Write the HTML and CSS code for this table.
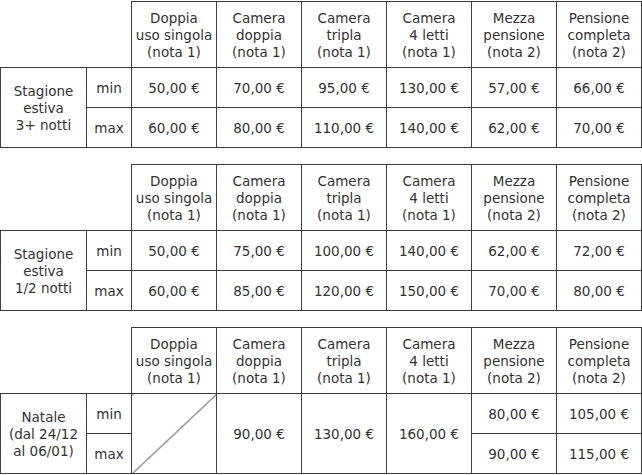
FILE: index.html
```html
<!DOCTYPE html>
<html>
<head>
<meta charset="utf-8">
<link rel="stylesheet" href="styles.css">
</head>
<body>
<div class="page">
<table class="rates">
  <colgroup><col class="c-label"><col class="c-mm"><col class="c-val"><col class="c-val"><col class="c-val"><col class="c-val"><col class="c-val"><col class="c-val"></colgroup>
  <tr class="head">
    <td class="blank" colspan="2"></td>
    <td>Doppia<br>uso singola<br>(nota 1)</td>
    <td>Camera<br>doppia<br>(nota 1)</td>
    <td>Camera<br>tripla<br>(nota 1)</td>
    <td>Camera<br>4 letti<br>(nota 1)</td>
    <td>Mezza<br>pensione<br>(nota 2)</td>
    <td>Pensione<br>completa<br>(nota 2)</td>
  </tr>
  <tr class="row">
    <td rowspan="2">Stagione<br>estiva<br>3+ notti</td>
    <td>min</td>
    <td>50,00 €</td><td>70,00 €</td><td>95,00 €</td><td>130,00 €</td><td>57,00 €</td><td>66,00 €</td>
  </tr>
  <tr class="row">
    <td>max</td>
    <td>60,00 €</td><td>80,00 €</td><td>110,00 €</td><td>140,00 €</td><td>62,00 €</td><td>70,00 €</td>
  </tr>
</table>

<table class="rates">
  <colgroup><col class="c-label"><col class="c-mm"><col class="c-val"><col class="c-val"><col class="c-val"><col class="c-val"><col class="c-val"><col class="c-val"></colgroup>
  <tr class="head">
    <td class="blank" colspan="2"></td>
    <td>Doppia<br>uso singola<br>(nota 1)</td>
    <td>Camera<br>doppia<br>(nota 1)</td>
    <td>Camera<br>tripla<br>(nota 1)</td>
    <td>Camera<br>4 letti<br>(nota 1)</td>
    <td>Mezza<br>pensione<br>(nota 2)</td>
    <td>Pensione<br>completa<br>(nota 2)</td>
  </tr>
  <tr class="row">
    <td rowspan="2">Stagione<br>estiva<br>1/2 notti</td>
    <td>min</td>
    <td>50,00 €</td><td>75,00 €</td><td>100,00 €</td><td>140,00 €</td><td>62,00 €</td><td>72,00 €</td>
  </tr>
  <tr class="row">
    <td>max</td>
    <td>60,00 €</td><td>85,00 €</td><td>120,00 €</td><td>150,00 €</td><td>70,00 €</td><td>80,00 €</td>
  </tr>
</table>

<table class="rates">
  <colgroup><col class="c-label"><col class="c-mm"><col class="c-val"><col class="c-val"><col class="c-val"><col class="c-val"><col class="c-val"><col class="c-val"></colgroup>
  <tr class="head">
    <td class="blank" colspan="2"></td>
    <td>Doppia<br>uso singola<br>(nota 1)</td>
    <td>Camera<br>doppia<br>(nota 1)</td>
    <td>Camera<br>tripla<br>(nota 1)</td>
    <td>Camera<br>4 letti<br>(nota 1)</td>
    <td>Mezza<br>pensione<br>(nota 2)</td>
    <td>Pensione<br>completa<br>(nota 2)</td>
  </tr>
  <tr class="row">
    <td rowspan="2">Natale<br>(dal 24/12<br>al 06/01)</td>
    <td>min</td>
    <td rowspan="2" class="diag"></td>
    <td rowspan="2">90,00 €</td>
    <td rowspan="2">130,00 €</td>
    <td rowspan="2">160,00 €</td>
    <td>80,00 €</td><td>105,00 €</td>
  </tr>
  <tr class="row">
    <td>max</td>
    <td>90,00 €</td><td>115,00 €</td>
  </tr>
</table>
</div>
</body>
</html>
```

FILE: styles.css
```css
html, body {
  margin: 0;
  padding: 0;
  background: #ffffff;
}

.page {
  display: flex;
  flex-direction: column;
  gap: 16px;
  padding-top: 1px;
}

.rates {
  border-collapse: collapse;
  table-layout: fixed;
  width: 642px;
  font-family: "DejaVu Sans", Verdana, sans-serif;
  font-size: 13.5px;
  line-height: 17px;
  color: #333333;
}

.c-label { width: 86px; }
.c-mm { width: 45px; }
.c-val { width: 85px; }

.rates td {
  border: 1px solid #3c3c3c;
  text-align: center;
  vertical-align: middle;
  padding: 2px 0 0 0;
  white-space: nowrap;
}

.rates .head td {
  height: 63px;
}

.rates .row td {
  height: 37px;
}

.rates td.blank {
  border-top: none;
  border-left: none;
}

.rates td.diag {
  background: linear-gradient(to bottom right, transparent calc(50% - 0.8px), #333333 50%, transparent calc(50% + 0.8px));
}
```
